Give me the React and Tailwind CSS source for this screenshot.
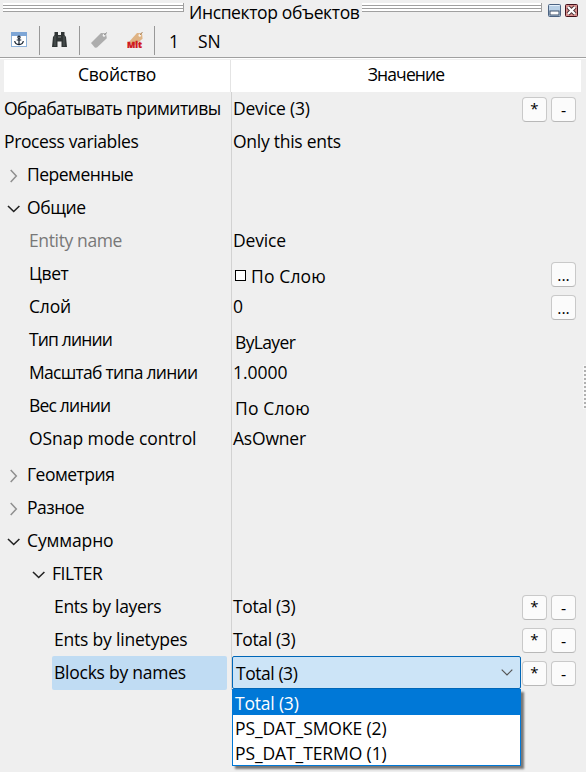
import React from "react";

function Chevron({ open, className = "" }) {
  return open ? (
    <svg className={className} width="14" height="8" viewBox="0 0 14 8" fill="none" stroke="#222" strokeWidth="1.6">
      <path d="M1 1l5.700 5.500L12.400 1" />
    </svg>
  ) : (
    <svg className={className} width="8" height="14" viewBox="0 0 8 14" fill="none" stroke="#8f8f8f" strokeWidth="1.5">
      <path d="M.7 1l5.600 6L.7 13" />
    </svg>
  );
}

function SmallButton({ kind }) {
  return (
    <span className="flex h-[25px] w-[25px] items-center justify-center rounded-[4px] border border-[#c9c9c9] border-b-[#b8b8b8] bg-[#fbfbfb]">
      {kind === "star" && <span className="-mt-[3px] text-[15px] leading-[20px]">*</span>}
      {kind === "minus" && <span className="text-[16px] leading-[20px]">-</span>}
      {kind === "dots" && <span className="pt-px text-[16px] leading-[20px]">...</span>}
    </span>
  );
}

function Row({ label, indent = "pl-[29px]", tracking = "", value, valueClass = "pl-[1px]", buttons = [], muted, toggle }) {
  return (
    <div className="flex h-[33px] shrink-0 leading-[31px]">
      <div className={`flex w-[231px] shrink-0 ${toggle ? "" : indent}`}>
        {toggle && (
          <span className={`flex h-[33px] shrink-0 items-center ${indent}`}>
            <span className="flex w-[20px]">
              <Chevron open={toggle === "open"} className={toggle === "open" ? "" : "ml-[3px]"} />
            </span>
          </span>
        )}
        <span className={`${tracking} ${muted ? "text-[#787878]" : ""}`}>{label}</span>
      </div>
      <div className={`flex flex-1 border-l border-[#d2d2d2] ${valueClass}`}>{value}</div>
      <div className="flex gap-[4px] pr-[10px] pt-[4px]">
        {buttons.map((b) => (
          <SmallButton key={b} kind={b} />
        ))}
      </div>
    </div>
  );
}

function Rails({ className }) {
  return (
    <div className={`flex h-[9px] flex-col border-r border-[#a0a0a0] ${className}`}>
      {[0, 1, 2].map((i) => (
        <div key={i} className="flex h-[3px] shrink-0 flex-col">
          <div className="h-[2px] bg-white" />
          <div className="h-px bg-[#a0a0a0]" />
        </div>
      ))}
    </div>
  );
}

const pair = ["star", "minus"];

export default function App() {
  return (
    <div className="relative flex h-[772px] w-[586px] flex-col overflow-hidden whitespace-nowrap bg-[#efefef] font-['Open_Sans','Noto_Sans',sans-serif] text-[17.5px] text-black">
      {/* Title bar */}
      <div className="flex h-[22px] shrink-0 pl-[3px] pt-[3px]">
        <Rails className="w-[181px]" />
        <div className="-mt-[3px] w-[178px] pl-[5px] leading-[24px]">
          <span className="tracking-[-0.37px]">Инспектор объектов</span>
        </div>
        <Rails className="w-[180px]" />
        <svg className="ml-[6px] mt-[1px]" width="31" height="13" viewBox="0 0 31 13">
          <rect x=".5" y=".5" width="12" height="12" rx="1" fill="#b9d0e6" stroke="#4c6382" />
          <path d="M1.5 1.5h10" stroke="#e6f1fb" />
          <rect x="2" y="7" width="9" height="4" fill="#fff" stroke="#3c4e68" />
          <rect x="17.500" y=".5" width="12" height="12" rx="1" fill="#d98f8c" stroke="#43101a" />
          <path d="M20 3l7 7m0-7l-7 7" stroke="#4a3036" strokeWidth="4" />
          <path d="M20 3l7 7m0-7l-7 7" stroke="#fff" strokeWidth="2.200" />
        </svg>
      </div>

      {/* Toolbar */}
      <div className="flex h-[35px] shrink-0 pt-[4px]">
        <svg className="ml-[11px] mt-[6px]" width="16" height="15" viewBox="0 0 16 15">
          <rect x=".5" y=".5" width="15" height="14" fill="#fff" stroke="#8db2da" />
          <rect width="16" height="4" fill="#7ea6d6" />
          <g fill="none" stroke="#14202e" strokeWidth="1.200">
            <circle cx="8" cy="5.300" r="1.100" />
            <path d="M8 6.500v6M5.700 8h4.600M3.700 9c.3 2.200 1.800 3.400 4.300 3.700 2.500-.3 4-1.500 4.300-3.700" />
          </g>
        </svg>
        <div className="ml-[12px] h-[29px] w-px bg-[#989898]" />
        <svg className="ml-[12px] mt-[6px]" width="15" height="15" viewBox="0 0 15 15" fill="#303535">
          <path d="M2.500 0h3.500v3h3V0h3.500v3L14 5l1 10H9.500V9.500H5.500V15H0L1 5l1.500-2z" />
          <path d="M3 4v10M12 4v10" stroke="#555c5c" />
          <path d="M6 5h3" stroke="#7a8080" />
        </svg>
        <div className="ml-[12px] h-[29px] w-px bg-[#989898]" />
        <svg className="ml-[11px] mt-[6px]" width="17" height="16" viewBox="0 0 17 16">
          <path d="M0 11L10 1l5 .2.8 5L6 15.500 4 15.800z" fill="#adadad" />
          <circle cx="13" cy="3.400" r="1.300" fill="#f4f4f4" />
          <path d="M13 3L16 .5" stroke="#909090" />
        </svg>
        <svg className="ml-[19px] mt-[6px]" width="17" height="16" viewBox="0 0 17 16">
          <path d="M1 11L10 1l5 .2.600 5.500L8 13z" fill="#dfb384" />
          <circle cx="12.800" cy="3.400" r="1.300" fill="#f8f4ee" />
          <path d="M13 3l2.500-3" stroke="#a88762" />
          <text x="0" y="15.500" textLength="15" lengthAdjust="spacingAndGlyphs" fontFamily="Open Sans" fontWeight="800" fontSize="8.500" fill="#d0171b" stroke="#d0171b" strokeWidth=".3">Mlt</text>
        </svg>
        <div className="ml-[10px] h-[29px] w-px bg-[#989898]" />
        <span className="ml-[14px] leading-[30px]">1</span>
        <span className="ml-[19px] leading-[30px]">SN</span>
      </div>
      <div className="h-[2px] shrink-0 border-b border-t border-b-white border-t-[#a0a0a0]" />

      {/* Column headers */}
      <div className="ml-[4px] mt-[1px] flex h-[32px] w-[577px] shrink-0 bg-white text-center leading-[28px]">
        <div className="w-[227px] border-r border-[#e4e4e4] tracking-[-0.25px]">Свойство</div>
        <div className="flex-1 tracking-[-0.85px]">Значение</div>
      </div>
      <div className="ml-[231px] h-px w-px shrink-0 bg-[#d2d2d2]" />

      {/* Property rows */}
      <Row label="Обрабатывать примитивы" tracking="tracking-[-0.55px]" indent="pl-[4px]" value={<span className="tracking-[-0.2px]">Device (3)</span>} buttons={pair} />
      <Row label="Process variables" tracking="tracking-[-0.37px]" indent="pl-[4px]" value={<span className="tracking-[-0.27px]">Only this ents</span>} />
      <Row label="Переменные" tracking="tracking-[-0.5px]" indent="pl-[7px]" toggle="closed" />
      <Row label="Общие" tracking="tracking-[-0.4px]" indent="pl-[7px]" toggle="open" />
      <Row label="Entity name" tracking="tracking-[-0.37px]" muted value={<span className="tracking-[-0.17px]">Device</span>} />
      <Row
        label="Цвет"
        tracking="tracking-[-0.4px]"
        value={
          <>
            <span className="mt-[12px] h-[11px] w-[11px] border border-black bg-white" />
            <span className="ml-[5px] pt-[3px] tracking-[0.15px]">По Слою</span>
          </>
        }
        valueClass="pl-[3px]"
        buttons={["dots"]}
      />
      <Row label="Слой" tracking="tracking-[-0.2px]" value="0" buttons={["dots"]} />
      <Row label="Тип линии" tracking="tracking-[-0.85px]" value={<span className="tracking-[-0.64px]">ByLayer</span>} valueClass="pl-[3px] pt-[3px]" />
      <Row label="Масштаб типа линии" tracking="tracking-[-0.72px]" value="1.0000" />
      <Row label="Вес линии" tracking="tracking-[-0.8px]" value={<span className="tracking-[0.15px]">По Слою</span>} valueClass="pl-[3px] pt-[3px]" />
      <Row label="OSnap mode control" tracking="tracking-[-0.07px]" value={<span className="tracking-[-0.2px]">AsOwner</span>} />
      <div className="ml-[231px] h-[3px] w-px shrink-0 bg-[#d2d2d2]" />
      <Row label="Геометрия" tracking="tracking-[-0.5px]" indent="pl-[7px]" toggle="closed" />
      <Row label="Разное" tracking="tracking-[-0.5px]" indent="pl-[7px]" toggle="closed" />
      <Row label="Суммарно" tracking="tracking-[-0.12px]" indent="pl-[7px]" toggle="open" />
      <Row label="FILTER" tracking="tracking-[-0.5px]" indent="pl-[32px]" toggle="open" />
      <Row label="Ents by layers" tracking="tracking-[-0.32px]" indent="pl-[54px]" value={<span className="tracking-[-0.35px]">Total (3)</span>} buttons={pair} />
      <Row label="Ents by linetypes" tracking="tracking-[-0.2px]" indent="pl-[54px]" value={<span className="tracking-[-0.35px]">Total (3)</span>} buttons={pair} />
      <div className="flex h-[33px] shrink-0 leading-[31px]">
        <div className="-mt-px ml-[52px] h-[34px] w-[175px] rounded-[2px] bg-[#c0dcf3] pl-[2px] pt-px tracking-[-0.25px]">Blocks by names</div>
        <div className="ml-[4px] w-px bg-[#d2d2d2]" />
        <div className="-mt-px flex h-[33px] w-[289px] items-center justify-between rounded-[2px] border border-[#0067b8] bg-[#cce4f7] pl-[3px] pr-[7px]">
          <span className="pt-px tracking-[-0.45px]">Total (3)</span>
          <svg width="12" height="7" viewBox="0 0 12 7" fill="none" stroke="#555" strokeWidth="1.200">
            <path d="M.7.700L6 6 11.300.700" />
          </svg>
        </div>
        <div className="flex flex-1 gap-[4px] pl-[1px] pt-[4px]">
          <SmallButton kind="star" />
          <SmallButton kind="minus" />
        </div>
      </div>

      {/* Open list of the combo box */}
      <div className="absolute left-[232px] top-[689px] h-[77px] w-[289px] border border-t-0 border-[#0078d7] bg-white leading-[25px] shadow-[3px_3px_2px_rgba(0,0,0,0.5)]">
        <div className="h-[26px] bg-[#0078d7] pl-[2px] pt-[2px] tracking-[-0.2px] text-white">Total (3)</div>
        <div className="h-[25px] pl-[2px] pt-px tracking-[-0.1px]">PS_DAT_SMOKE (2)</div>
        <div className="h-[25px] pl-[2px] pt-px tracking-[-0.1px]">PS_DAT_TERMO (1)</div>
      </div>

      {/* Resize grip over the right edge */}
      <div className="absolute left-[583px] top-[365px] flex w-[3px] flex-col gap-[2px] overflow-hidden bg-[#f7f7f7] py-px">
        {Array.from({ length: 11 }, (_, i) => (
          <div key={i} className="ml-px h-[2px] w-[2px] bg-[#b0b0b0]" />
        ))}
      </div>
    </div>
  );
}
